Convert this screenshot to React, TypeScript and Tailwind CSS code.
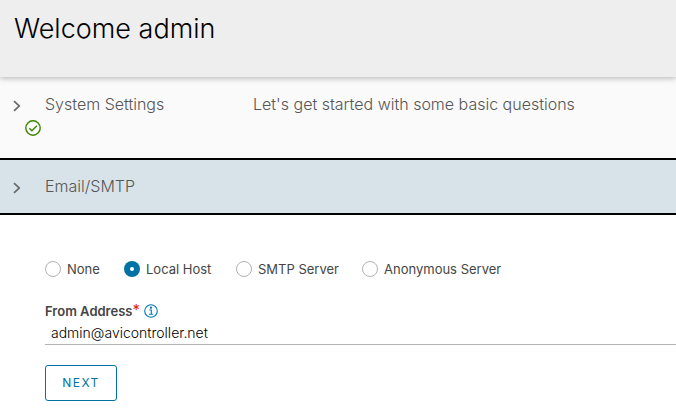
function Chevron() {
  return (
    <svg className="h-3 w-[8px] shrink-0" viewBox="0 0 8 12" fill="none" stroke="#666" strokeWidth="1.7">
      <path d="M1 1.2 6.2 6 1 10.8" />
    </svg>
  );
}

function Radio({ label, checked, width }: { label: string; checked?: boolean; width: string }) {
  return (
    <label className={`flex shrink-0 items-center whitespace-nowrap text-[13px] leading-5 text-[#454545] ${width}`}>
      <span
        className={`mr-[6px] flex size-4 shrink-0 items-center justify-center rounded-full ${
          checked ? "bg-[#0072a3]" : "border border-[#b3b3b3] bg-white"
        }`}
      >
        {checked && <span className="size-1 rounded-full bg-white" />}
      </span>
      <span>{label}</span>
    </label>
  );
}

export default function App() {
  return (
    <div className="flex h-[418px] w-[676px] flex-col overflow-hidden bg-white font-['Inter',sans-serif]">
      <header className="z-10 h-[77px] shrink-0 bg-[#eee] pl-[14px] pt-[11px] shadow-[0_1px_6px_rgba(0,0,0,0.3)]">
        <h1 className="text-[27px] font-light leading-9 text-black">Welcome admin</h1>
      </header>

      <section className="h-[81px] shrink-0 bg-[#fafafa] pt-[17px] text-[16px] font-light leading-5 text-[#565656]">
        <div className="flex items-center pl-[13px]">
          <div className="flex w-8 pt-[3px]"><Chevron /></div>
          <span className="w-[208px]">System Settings</span>
          <span>Let's get started with some basic questions</span>
        </div>
        <svg className="ml-[25px] mt-[6px] size-4" viewBox="0 0 16 16" fill="none" stroke="#3c8500" strokeWidth="1.4">
          <circle cx="8" cy="8" r="7.2" />
          <path d="m4.3 8.2 2.6 2.6 5-5" />
        </svg>
      </section>

      <section className="flex h-[57px] shrink-0 items-center border-y-2 border-black bg-[#d8e3e9] pl-[13px] text-[16px] font-light leading-5 text-[#565656]">
        <div className="flex w-8 pt-[2px]"><Chevron /></div>
        <span className="pb-[2px]">Email/SMTP</span>
      </section>

      <main className="flex flex-col pl-[45px] pt-[44px]">
        <div className="flex">
          <Radio label="None" width="w-[79px]" />
          <Radio label="Local Host" checked width="w-[112px]" />
          <Radio label="SMTP Server" width="w-[126px]" />
          <Radio label="Anonymous Server" width="w-[150px]" />
        </div>
        <div className="mt-[22px] flex h-5 items-center text-[13px] font-semibold leading-5 text-[#454545]">
          <span>From Address</span>
          <span className="h-5 text-[15px] font-normal leading-[18px] text-[#e62700]">*</span>
          <svg className="ml-1 size-[14px]" viewBox="0 0 14 14" fill="none" stroke="#0079b8" strokeWidth="1.1">
            <circle cx="7" cy="7" r="6.3" />
            <path d="M5.3 6h2v4.2M5 10.3h4" />
            <circle cx="7" cy="3.7" r=".6" fill="#0079b8" />
          </svg>
        </div>
        <div className="h-[24px] border-b border-[#b3b3b3] pl-[6px] pt-[2px] text-[14px] font-light leading-5 text-black">
          admin@avicontroller.net
        </div>
        <button className="mt-5 h-9 w-[72px] rounded-[3px] border border-[#0072a3] text-[12px] leading-4 tracking-[1.5px] text-[#0072a3]">
          NEXT
        </button>
      </main>
    </div>
  );
}
